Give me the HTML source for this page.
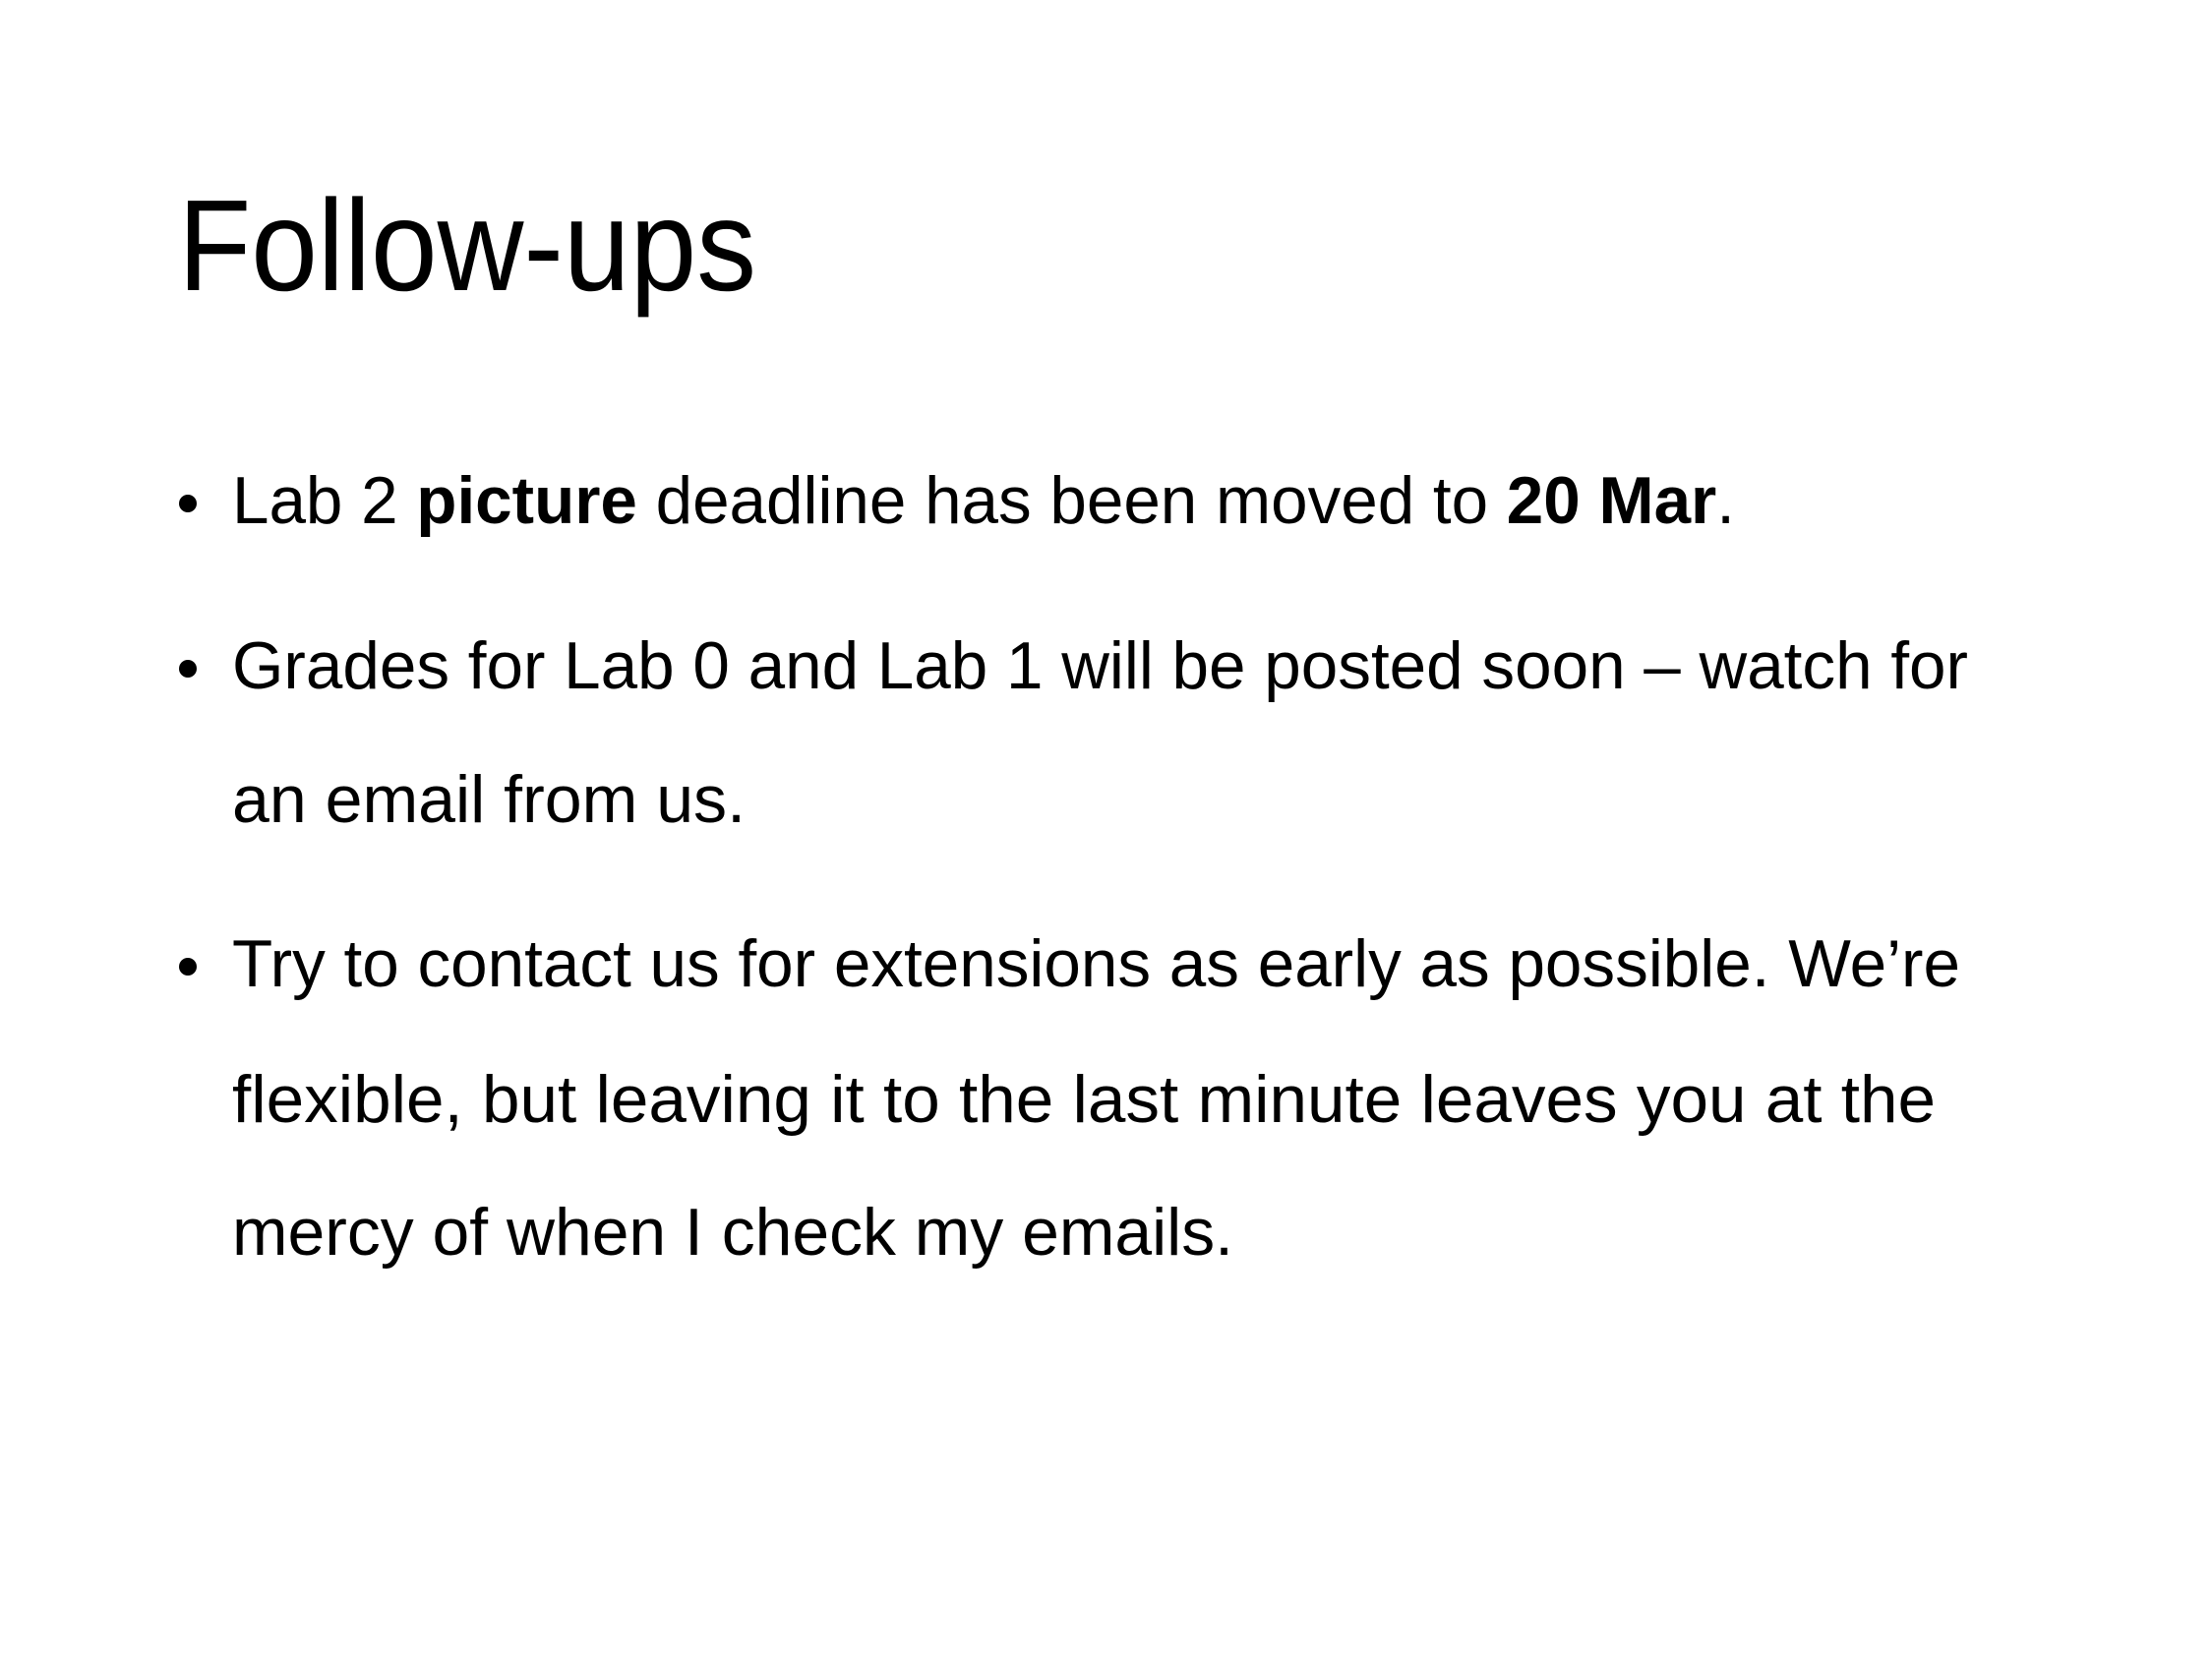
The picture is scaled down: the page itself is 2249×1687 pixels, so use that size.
<!DOCTYPE html>
<html><head><meta charset="utf-8"><style>
html,body{margin:0;padding:0;background:#fff;}
svg{display:block;}
text{font-family:"Liberation Sans",sans-serif;fill:#000;}
</style></head><body>
<svg width="2249" height="1687" viewBox="0 0 2249 1687" xmlns="http://www.w3.org/2000/svg">
<rect width="2249" height="1687" fill="#fff"/>
<text x="181" y="295" font-size="132" textLength="588" lengthAdjust="spacingAndGlyphs">Follow-ups</text>
<g font-size="68">
<circle cx="191" cy="512" r="9"/>
<text x="236" y="532" textLength="1528" lengthAdjust="spacingAndGlyphs">Lab 2 <tspan font-weight="bold">picture</tspan> deadline has been moved to <tspan font-weight="bold">20 Mar</tspan>.</text>
<circle cx="191" cy="680" r="9"/>
<text x="236" y="700" textLength="1765" lengthAdjust="spacingAndGlyphs">Grades for Lab 0 and Lab 1 will be posted soon – watch for</text>
<text x="236" y="836" textLength="522" lengthAdjust="spacingAndGlyphs">an email from us.</text>
<circle cx="191" cy="983" r="9"/>
<text x="236" y="1003" textLength="1757" lengthAdjust="spacingAndGlyphs">Try to contact us for extensions as early as possible. We’re</text>
<text x="236" y="1141" textLength="1732" lengthAdjust="spacingAndGlyphs">flexible, but leaving it to the last minute leaves you at the</text>
<text x="236" y="1276" textLength="1018" lengthAdjust="spacingAndGlyphs">mercy of when I check my emails.</text>
</g>
</svg>
</body></html>
